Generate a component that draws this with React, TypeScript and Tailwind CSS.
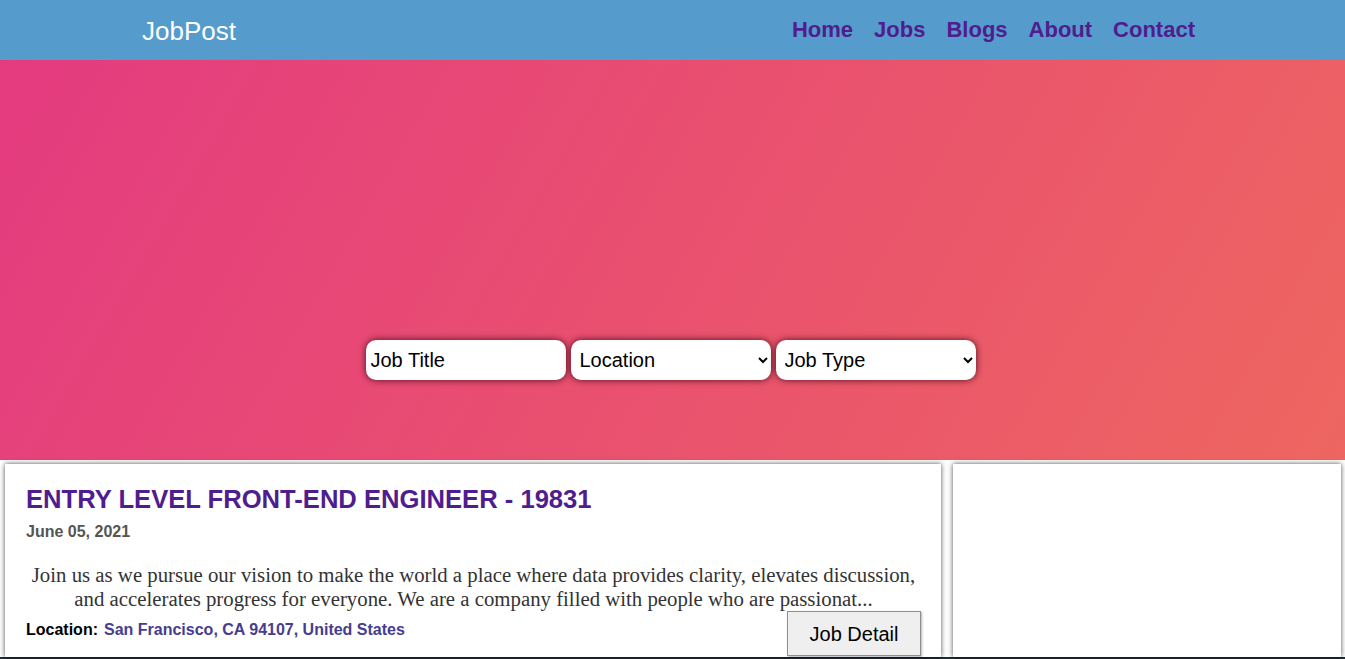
import { ReactElement } from 'react'

const navLinks = ['Home', 'Jobs', 'Blogs', 'About', 'Contact']

const Navbar = (): ReactElement => {
  return (
    <nav className="h-[60px] flex items-center pt-[2px] bg-[#559bcb] font-['Liberation_Sans',Arial,sans-serif]">
      <a href="#" className="ml-[142px] text-[26px] text-white leading-none">
        JobPost
      </a>
      <ul className="flex items-center gap-x-[21px] ml-auto mr-[150px]">
        {navLinks.map((link) => (
          <li key={link}>
            <a href="#" className="text-[22px] font-bold text-[#4f1d8e] leading-none">
              {link}
            </a>
          </li>
        ))}
      </ul>
    </nav>
  )
}

const Hero = (): ReactElement => {
  const field =
    "h-10 w-[200px] rounded-[10px] bg-white pl-[5px] text-[20px] text-black shadow-[0_0_7px_rgba(50,0,15,0.85)] outline-none font-['Liberation_Sans',Arial,sans-serif]"

  return (
    <section className="h-[400px] flex items-end justify-center pb-[80px] bg-[linear-gradient(120deg,#e43b80_0%,#e9506f_50%,#ee6660_100%)]">
      <form className="flex gap-x-[5px] mr-[4px]">
        <input type="text" placeholder="Job Title" className={`${field} placeholder:text-black`} />
        <select className={field} defaultValue="">
          <option value="">Location</option>
          <option>San Francisco</option>
        </select>
        <select className={field} defaultValue="">
          <option value="">Job Type</option>
          <option>Full Time</option>
        </select>
      </form>
    </section>
  )
}

const JobCard = (): ReactElement => {
  return (
    <article className="w-[936px] h-[193px] bg-white pl-[21px] pr-[20px] pt-[20px] shadow-[0_0_5px_rgba(0,0,0,0.7)] font-['Liberation_Sans',Arial,sans-serif]">
      <h2 className="text-[25.6px] font-bold text-[#4f1d8e] leading-[30px]">
        ENTRY LEVEL FRONT-END ENGINEER - 19831
      </h2>
      <p className="mt-[8px] text-[16px] font-bold text-[#555] leading-[20px]">June 05, 2021</p>
      <p className="mt-[21px] text-center text-[20.8px] leading-[24px] text-[#333] font-['Liberation_Serif','Times_New_Roman',serif]">
        Join us as we pursue our vision to make the world a place where data provides clarity, elevates discussion,
        and accelerates progress for everyone. We are a company filled with people who are passionat...
      </p>
      <div className="flex items-start justify-between">
        <p className="mt-[9px] text-[16px] font-bold leading-[20px]">
          <span className="text-black mr-[6px]">Location:</span>
          <span className="text-[#463d8f]">San Francisco, CA 94107, United States</span>
        </p>
        <button className="h-[45px] w-[134px] bg-[#efefef] border border-[#8f8f8f] text-[20px] text-black shadow-[1px_1px_2px_rgba(0,0,0,0.3)]">
          Job Detail
        </button>
      </div>
    </article>
  )
}

const SideCard = (): ReactElement => {
  return <aside className="w-[388px] h-[193px] bg-white shadow-[0_0_5px_rgba(0,0,0,0.7)]"></aside>
}

export default function App(): ReactElement {
  return (
    <div className="min-h-screen bg-white">
      <Navbar />
      <Hero />
      <main className="flex gap-x-[12px] pl-[5px] pt-[4px]">
        <JobCard />
        <SideCard />
      </main>
      <footer className="h-[60px] border-t-2 border-[#1d2b3a] bg-[#559bcb]"></footer>
    </div>
  )
}
